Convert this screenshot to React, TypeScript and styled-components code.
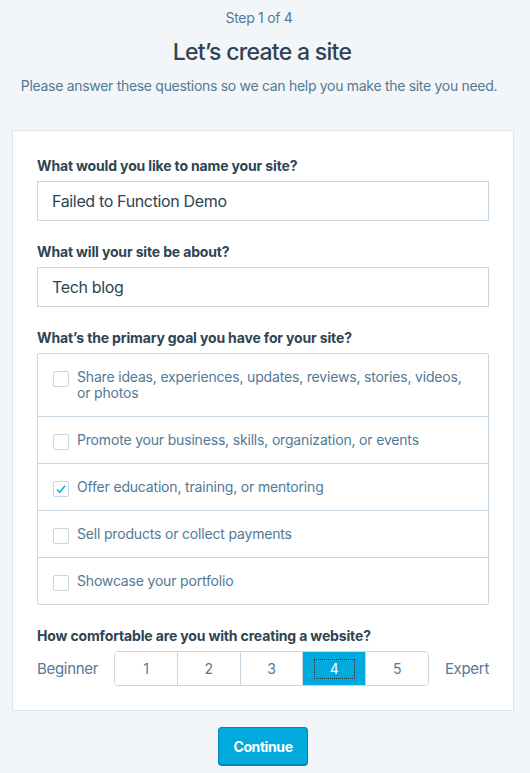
import React from "react";
import styled, { createGlobalStyle } from "styled-components";

const Global = createGlobalStyle`
  html, body { margin: 0; padding: 0; background: #f3f6f8; }
  body { font-family: Inter, "Noto Sans", "Liberation Sans", sans-serif; color: #2e4453; -webkit-font-smoothing: antialiased; }
  * { box-sizing: border-box; }
`;

const Page = styled.div`
  display: flex;
  flex-direction: column;
  align-items: center;
  padding: 8px 16px 0 12px;
`;

const Header = styled.header`
  align-self: stretch;
  display: flex;
  flex-direction: column;
  align-items: center;
  padding-right: 8px;
`;

const Step = styled.div`
  font-size: 14px;
  line-height: 20px;
  letter-spacing: -0.3px;
  color: #537994;
`;

const Title = styled.h1`
  margin: 8px 0 0;
  font-size: 23px;
  line-height: 32px;
  font-weight: 500;
  letter-spacing: -0.7px;
  color: #2e4453;
  transform: translateX(3px);
`;

const Subtitle = styled.p`
  margin: 8px 0 0;
  font-size: 14px;
  line-height: 20px;
  letter-spacing: -0.3px;
  color: #537994;
`;

const Card = styled.div`
  margin-top: 34px;
  align-self: stretch;
  background: #fff;
  border: 1px solid #dde5eb;
  padding: 24px;
  display: flex;
  flex-direction: column;
  gap: 20px;
`;

const Field = styled.div`
  display: flex;
  flex-direction: column;
`;

const Label = styled.div`
  font-size: 14px;
  line-height: 21px;
  font-weight: 700;
  letter-spacing: -0.15px;
  color: #2e4453;
  margin-bottom: 5px;
`;

const TextInput = styled.div`
  height: 40px;
  border: 1px solid #c8d7e1;
  padding: 0 14px;
  display: flex;
  align-items: center;
  font-size: 16px;
  letter-spacing: -0.35px;
  color: #2e4453;
`;

const List = styled.div`
  border: 1px solid #c8d7e1;
  border-radius: 2px;
  display: flex;
  flex-direction: column;
`;

const Row = styled.div`
  display: flex;
  align-items: flex-start;
  gap: 8px;
  padding: 15px;
  font-size: 14px;
  line-height: 16px;
  letter-spacing: -0.18px;
  color: #537994;
  & + & { border-top: 1px solid #c8d7e1; }
`;

const Box = styled.span`
  flex: none;
  width: 16px;
  height: 16px;
  margin: 2px 0 -2px;
  border: 1px solid #c8d7e1;
  border-radius: 2px;
  background: #fff;
  display: flex;
  align-items: center;
  justify-content: center;
`;

const Scale = styled.div`
  display: flex;
  align-items: center;
  gap: 16px;
  font-size: 15px;
  letter-spacing: -0.3px;
  color: #537994;
`;

const Buttons = styled.div`
  flex: 1;
  display: flex;
  height: 35px;
  border: 1px solid #c8d7e1;
  border-radius: 4px;
  overflow: hidden;
`;

const ScaleButton = styled.div<{ $active?: boolean }>`
  flex: 1;
  display: flex;
  align-items: center;
  justify-content: center;
  font-size: 14px;
  background: ${(p) => (p.$active ? "#00aadc" : "#fff")};
  color: ${(p) => (p.$active ? "#fff" : "#537994")};
  & + & { border-left: 1px solid #c8d7e1; }
`;

const Focus = styled.span`
  border: 1px dotted #1d3746;
  padding: 0 15px;
  line-height: 18px;
`;

const Continue = styled.button`
  margin-top: 16px;
  height: 39px;
  padding: 0 14px;
  background: #00aadc;
  color: #fff;
  border: 1px solid #0087be;
  border-bottom-width: 2px;
  border-radius: 4px;
  font-family: inherit;
  font-size: 14px;
  font-weight: 700;
  letter-spacing: -0.4px;
`;

const goals = [
  "Share ideas, experiences, updates, reviews, stories, videos, or photos",
  "Promote your business, skills, organization, or events",
  "Offer education, training, or mentoring",
  "Sell products or collect payments",
  "Showcase your portfolio",
];

export default function App() {
  return (
    <>
      <Global />
      <Page>
        <Header>
          <Step>Step 1 of 4</Step>
          <Title>Let’s create a site</Title>
          <Subtitle>Please answer these questions so we can help you make the site you need.</Subtitle>
        </Header>
        <Card>
          <Field>
            <Label>What would you like to name your site?</Label>
            <TextInput>Failed to Function Demo</TextInput>
          </Field>
          <Field>
            <Label>What will your site be about?</Label>
            <TextInput>Tech blog</TextInput>
          </Field>
          <Field>
            <Label>What’s the primary goal you have for your site?</Label>
            <List>
              {goals.map((g, i) => (
                <Row key={g}>
                  <Box>
                    {i === 2 && (
                      <svg width="12" height="12" viewBox="0 0 12 12">
                        <path d="M2 6.5 L4.8 9.2 L10 2.8" fill="none" stroke="#00aadc" strokeWidth="1.4" />
                      </svg>
                    )}
                  </Box>
                  <span>{g}</span>
                </Row>
              ))}
            </List>
          </Field>
          <Field>
            <Label>How comfortable are you with creating a website?</Label>
            <Scale>
              <span>Beginner</span>
              <Buttons>
                {[1, 2, 3, 4, 5].map((n) => (
                  <ScaleButton key={n} $active={n === 4}>
                    {n === 4 ? <Focus>{n}</Focus> : n}
                  </ScaleButton>
                ))}
              </Buttons>
              <span>Expert</span>
            </Scale>
          </Field>
        </Card>
        <Continue>Continue</Continue>
      </Page>
    </>
  );
}
